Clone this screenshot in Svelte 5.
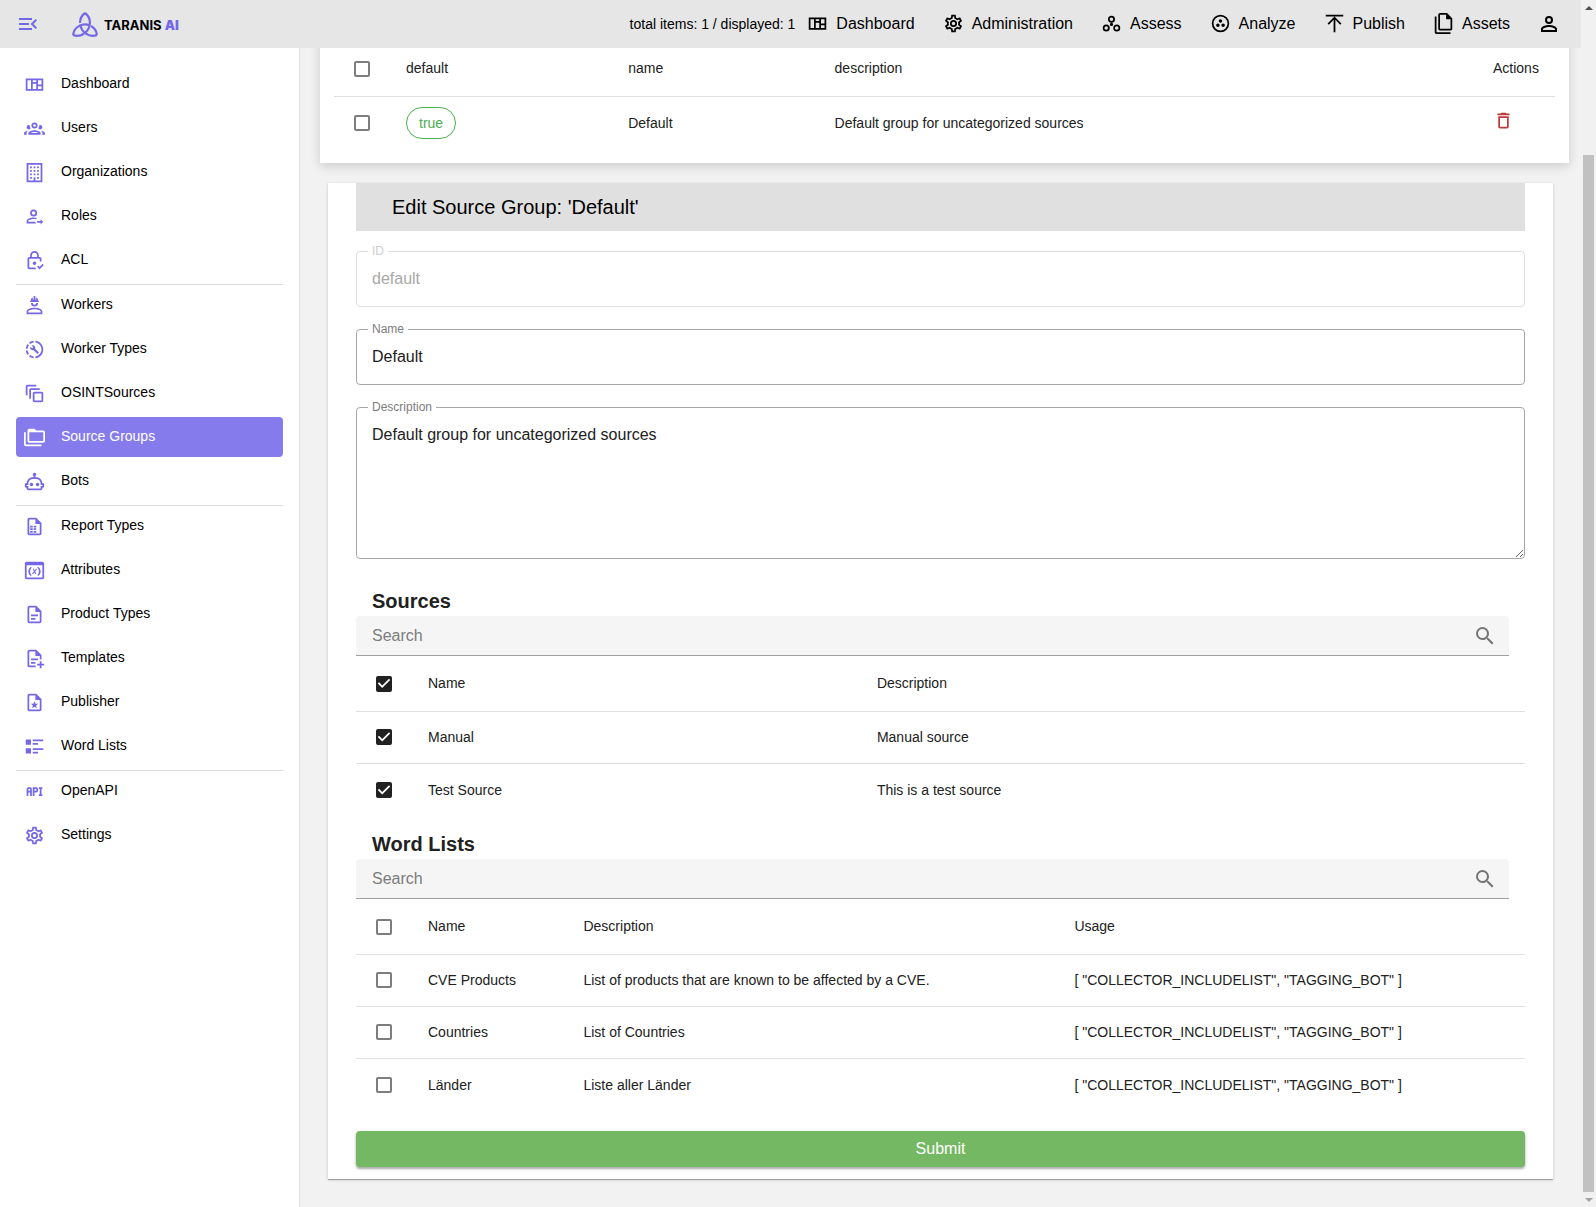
<script>
  const icons = {
    dashboard: 'M2,5V19H22V5H2M4,7H8V17H4V7M10,7H14V9H10V7M10,11H14V17H10V11M16,7H20V12H16V7M16,14H20V17H16V14Z',
    users: 'M12,5A3.5,3.5 0 0,0 8.5,8.5A3.5,3.5 0 0,0 12,12A3.5,3.5 0 0,0 15.5,8.5A3.5,3.5 0 0,0 12,5M12,7A1.5,1.5 0 0,1 13.5,8.5A1.5,1.5 0 0,1 12,10A1.5,1.5 0 0,1 10.5,8.5A1.5,1.5 0 0,1 12,7M5.5,8A2.5,2.5 0 0,0 3,10.5C3,11.44 3.53,12.25 4.29,12.68C4.65,12.88 5.06,13 5.5,13C5.94,13 6.35,12.88 6.71,12.68C7.08,12.47 7.39,12.17 7.62,11.81C6.89,10.86 6.5,9.7 6.5,8.5C6.5,8.41 6.5,8.31 6.5,8.22C6.2,8.08 5.86,8 5.5,8M18.5,8C18.14,8 17.8,8.08 17.5,8.22C17.5,8.31 17.5,8.41 17.5,8.5C17.5,9.7 17.11,10.86 16.38,11.81C16.5,12 16.63,12.15 16.78,12.3C16.94,12.45 17.1,12.58 17.29,12.68C17.65,12.88 18.06,13 18.5,13C18.94,13 19.35,12.88 19.71,12.68C20.47,12.25 21,11.44 21,10.5A2.5,2.5 0 0,0 18.5,8M12,14C9.66,14 5,15.17 5,17.5V19H19V17.5C19,15.17 14.34,14 12,14M4.71,14.55C2.78,14.78 0,15.76 0,17.5V19H3V17.07C3,16.06 3.69,15.22 4.71,14.55M19.29,14.55C20.31,15.22 21,16.06 21,17.07V19H24V17.5C24,15.76 21.22,14.78 19.29,14.55M12,16C13.53,16 15.24,16.5 16.23,17H7.77C8.76,16.5 10.47,16 12,16Z',
    building: 'M19 3V21H13V17.5H11V21H5V3H19M15 7H17V5H15V7M11 7H13V5H11V7M7 7H9V5H7V7M15 11H17V9H15V11M11 11H13V9H11V11M7 11H9V9H7V11M15 15H17V13H15V15M11 15H13V13H11V15M7 15H9V13H7V15M15 19H17V17H15V19M7 19H9V17H7V19M21 1H3V23H21V1Z',
    roles: 'M19,21V19H15V17H19V15L22,18L19,21M11,4A4,4 0 0,1 15,8A4,4 0 0,1 11,12A4,4 0 0,1 7,8A4,4 0 0,1 11,4M11,6A2,2 0 0,0 9,8A2,2 0 0,0 11,10A2,2 0 0,0 13,8A2,2 0 0,0 11,6M11,13C12.1,13 13.66,13.23 15.11,13.69C14.5,14.07 14,14.6 13.61,15.23C12.79,15.03 11.89,14.9 11,14.9C8.03,14.9 4.9,16.36 4.9,17V18.1H13.04C13.13,18.8 13.38,19.44 13.76,20H3V17C3,14.34 8.33,13 11,13Z',
    lock: 'M14 15C14 16.11 13.11 17 12 17C10.89 17 10 16.1 10 15C10 13.89 10.89 13 12 13C13.11 13 14 13.9 14 15M13.09 20C13.21 20.72 13.46 21.39 13.81 22H6C4.89 22 4 21.1 4 20V10C4 8.89 4.89 8 6 8H7V6C7 3.24 9.24 1 12 1S17 3.24 17 6V8H18C19.11 8 20 8.9 20 10V13.09C19.67 13.04 19.34 13 19 13C18.66 13 18.33 13.04 18 13.09V10H6V20H13.09M9 8H15V6C15 4.34 13.66 3 12 3S9 4.34 9 6V8M21.34 15.84L17.75 19.43L16.16 17.84L15 19.25L17.75 22.25L22.5 17.5L21.34 15.84Z',
    worker: 'M12 14.5C7.6 14.5 3 16.2 3 18.8V22H21V18.8C21 16.2 16.4 14.5 12 14.5M12 16.4C15.5 16.4 19.1 17.8 19.1 18.8V20.1H4.9V18.8C4.9 17.8 8.5 16.4 12 16.4M8 9A4 4 0 0 0 12 13A4 4 0 0 0 16 9M10 9H14A2 2 0 0 1 10 9M11.5 1C11.2 1 11 1.2 11 1.5V5H10V2.5C10 2.5 7.75 3.4 7.75 6.2C7.75 6.2 7 6.4 7 8H17C17 6.4 16.25 6.2 16.25 6.2C16.25 3.4 14 2.5 14 2.5V5H13V1.5C13 1.2 12.8 1 12.5 1Z',
    workerType: 'M13 2.03V2.05L13 4.05C17.39 4.59 20.5 8.58 19.96 12.97C19.5 16.61 16.64 19.5 13 19.93V21.93C18.5 21.38 22.5 16.5 21.95 11C21.5 6.25 17.73 2.5 13 2.03M11 2.06C9.05 2.25 7.19 3 5.67 4.26L7.1 5.74C8.22 4.84 9.57 4.26 11 4.06V2.06M4.26 5.67C3 7.19 2.25 9.04 2.05 11H4.05C4.24 9.58 4.8 8.23 5.69 7.1L4.26 5.67M2.06 13C2.26 14.96 3.03 16.81 4.27 18.33L5.69 16.9C4.81 15.77 4.24 14.42 4.06 13H2.06M7.1 18.37L5.67 19.74C7.18 21 9.04 21.79 11 22V20C9.58 19.82 8.23 19.25 7.1 18.37M16.82 15.19L12.71 11.08C13.12 10.04 12.89 8.82 12.03 7.97C11.13 7.06 9.78 6.88 8.69 7.38L10.63 9.32L9.28 10.68L7.29 8.73C6.75 9.82 7 11.17 7.88 12.08C8.74 12.94 9.96 13.16 11 12.76L15.11 16.86C15.29 17.05 15.56 17.05 15.74 16.86L16.78 15.83C17 15.65 17 15.33 16.82 15.19Z',
    layers: 'M4 2C2.89 2 2 2.9 2 4V14H4V4H14V2H4M8 6C6.89 6 6 6.9 6 8V18H8V8H18V6H8M12 10C10.89 10 10 10.9 10 12V20C10 21.11 10.9 22 12 22H20C21.11 22 22 21.11 22 20V12C22 10.9 21.11 10 20 10H12M12 12H20V20H12V12Z',
    folders: 'M22,4A2,2 0 0,1 24,6V16A2,2 0 0,1 22,18H6A2,2 0 0,1 4,16V4A2,2 0 0,1 6,2H12L14,4H22M2,6V20H20V22H2A2,2 0 0,1 0,20V6H2M6,6V16H22V6H6Z',
    robot: 'M17.5 15.5C17.5 16.61 16.61 17.5 15.5 17.5S13.5 16.61 13.5 15.5 14.4 13.5 15.5 13.5 17.5 14.4 17.5 15.5M8.5 13.5C7.4 13.5 6.5 14.4 6.5 15.5S7.4 17.5 8.5 17.5 10.5 16.61 10.5 15.5 9.61 13.5 8.5 13.5M23 15V18C23 18.55 22.55 19 22 19H21V20C21 21.11 20.11 22 19 22H5C3.9 22 3 21.11 3 20V19H2C1.45 19 1 18.55 1 18V15C1 14.45 1.45 14 2 14H3C3 10.13 6.13 7 10 7H11V5.73C10.4 5.39 10 4.74 10 4C10 2.9 10.9 2 12 2S14 2.9 14 4C14 4.74 13.6 5.39 13 5.73V7H14C17.87 7 21 10.13 21 14H22C22.55 14 23 14.45 23 15M21 16H19V14C19 11.24 16.76 9 14 9H10C7.24 9 5 11.24 5 14V16H3V17H5V20H19V17H21V16Z',
    report: 'M14 2H6C4.89 2 4 2.9 4 4V20C4 21.11 4.89 22 6 22H18C19.11 22 20 21.11 20 20V8L14 2M18 20H6V4H13V9H18V20M7 11H10V13H7V11M11 11H14V13H11V11M7 14H10V16H7V14M11 14H14V16H11V14M7 17H10V19H7V17M11 17H14V19H11V17Z',
    variable: 'M21 2H3C1.9 2 1 2.9 1 4V20C1 21.1 1.9 22 3 22H21C22.1 22 23 21.1 23 20V4C23 2.9 22.1 2 21 2M21 20H3V6H21V20M16.6 8C18.1 9.3 19 11.1 19 13C19 14.9 18.1 16.7 16.6 18L15 17.4C16.3 16.4 17 14.7 17 13S16.3 9.6 15 8.6L16.6 8M7.4 8L9 8.6C7.7 9.6 7 11.3 7 13S7.7 16.4 9 17.4L7.4 18C5.9 16.7 5 14.9 5 13S5.9 9.3 7.4 8M12.1 12L13.5 10H15L12.8 13L14.1 16H12.8L12 14L10.6 16H9L11.3 12.9L10 10H11.3L12.1 12Z',
    document: 'M6,2A2,2 0 0,0 4,4V20A2,2 0 0,0 6,22H18A2,2 0 0,0 20,20V8L14,2H6M6,4H13V9H18V20H6V4M8,12V14H16V12H8M8,16V18H13V16H8Z',
    documentPlus: 'M23 18H20V15H18V18H15V20H18V23H20V20H23M6 2C4.89 2 4 2.9 4 4V20C4 21.11 4.89 22 6 22H13.81C13.45 21.38 13.2 20.7 13.08 20H6V4H13V9H18V13.08C18.33 13.03 18.67 13 19 13S19.67 13.03 20 13.08V8L14 2M8 12V14H16V12M8 16V18H13V16Z',
    star: 'M14 2H6C4.89 2 4 2.9 4 4V20C4 21.11 4.89 22 6 22H18C19.11 22 20 21.11 20 20V8L14 2M18 20H6V4H13V9H18V20M12 10.5L13.2 13.3L16.2 13.5L13.9 15.5L14.6 18.5L12 16.9L9.4 18.5L10.1 15.5L7.8 13.5L10.8 13.3Z',
    list: 'M2 14H8V20H2M16 8H10V10H16M2 10H8V4H2M10 4V6H22V4M10 20H16V18H10M10 16H22V14H10',
    api: 'M7 7H5A2 2 0 0 0 3 9V17H5V13H7V17H9V9A2 2 0 0 0 7 7M7 11H5V9H7M14 7H10V17H12V13H14A2 2 0 0 0 16 11V9A2 2 0 0 0 14 7M14 11H12V9H14M20 9V15H21V17H17V15H18V9H17V7H21V9Z',
    cog: 'M12,8A4,4 0 0,1 16,12A4,4 0 0,1 12,16A4,4 0 0,1 8,12A4,4 0 0,1 12,8M12,10A2,2 0 0,0 10,12A2,2 0 0,0 12,14A2,2 0 0,0 14,12A2,2 0 0,0 12,10M10,22C9.75,22 9.54,21.82 9.5,21.58L9.13,18.93C8.5,18.68 7.96,18.34 7.44,17.94L4.95,18.95C4.73,19.03 4.46,18.95 4.34,18.73L2.34,15.27C2.21,15.05 2.27,14.78 2.46,14.63L4.57,12.97L4.5,12L4.57,11L2.46,9.37C2.27,9.22 2.21,8.95 2.34,8.73L4.34,5.27C4.46,5.05 4.73,4.96 4.95,5.05L7.44,6.05C7.96,5.66 8.5,5.32 9.13,5.07L9.5,2.42C9.54,2.18 9.75,2 10,2H14C14.25,2 14.46,2.18 14.5,2.42L14.87,5.07C15.5,5.32 16.04,5.66 16.56,6.05L19.05,5.05C19.27,4.96 19.54,5.05 19.66,5.27L21.66,8.73C21.79,8.95 21.73,9.22 21.54,9.37L19.43,11L19.5,12L19.43,13L21.54,14.63C21.73,14.78 21.79,15.05 21.66,15.27L19.66,18.73C19.54,18.95 19.27,19.04 19.05,18.95L16.56,17.95C16.04,18.34 15.5,18.68 14.87,18.93L14.5,21.58C14.46,21.82 14.25,22 14,22H10M11.25,4L10.88,6.61C9.68,6.86 8.62,7.5 7.85,8.39L5.44,7.35L4.69,8.65L6.8,10.2C6.4,11.37 6.4,12.64 6.8,13.8L4.68,15.36L5.43,16.66L7.86,15.62C8.63,16.5 9.68,17.14 10.87,17.38L11.24,20H12.76L13.13,17.39C14.32,17.14 15.37,16.5 16.14,15.62L18.57,16.66L19.32,15.36L17.2,13.81C17.6,12.64 17.6,11.37 17.2,10.2L19.31,8.65L18.56,7.35L16.15,8.39C15.38,7.5 14.32,6.86 13.12,6.62L12.75,4H11.25Z',
    assess: 'M18,19C16.89,19 16,18.1 16,17C16,15.89 16.89,15 18,15A2,2 0 0,1 20,17A2,2 0 0,1 18,19M18,13A4,4 0 0,0 14,17A4,4 0 0,0 18,21A4,4 0 0,0 22,17A4,4 0 0,0 18,13M12,11.1A1.9,1.9 0 0,0 10.1,13A1.9,1.9 0 0,0 12,14.9A1.9,1.9 0 0,0 13.9,13A1.9,1.9 0 0,0 12,11.1M6,19C4.89,19 4,18.1 4,17C4,15.89 4.89,15 6,15A2,2 0 0,1 8,17A2,2 0 0,1 6,19M6,13A4,4 0 0,0 2,17A4,4 0 0,0 6,21A4,4 0 0,0 10,17A4,4 0 0,0 6,13M12,9C10.89,9 10,8.1 10,7C10,5.89 10.89,5 12,5A2,2 0 0,1 14,7A2,2 0 0,1 12,9M12,11A4,4 0 0,0 16,7A4,4 0 0,0 12,3A4,4 0 0,0 8,7A4,4 0 0,0 12,11Z',
    analyze: 'M15,12C13.89,12 13,12.89 13,14A2,2 0 0,0 15,16A2,2 0 0,0 17,14C17,12.89 16.1,12 15,12M12,20A8,8 0 0,1 4,12A8,8 0 0,1 12,4A8,8 0 0,1 20,12A8,8 0 0,1 12,20M12,2A10,10 0 0,0 2,12A10,10 0 0,0 12,22A10,10 0 0,0 22,12A10,10 0 0,0 12,2M14,9C14,7.89 13.1,7 12,7C10.89,7 10,7.89 10,9A2,2 0 0,0 12,11A2,2 0 0,0 14,9M9,12A2,2 0 0,0 7,14A2,2 0 0,0 9,16C10.11,16 11,15.1 11,14C11,12.89 10.11,12 9,12Z',
    publish: 'M4.08,11.92L12,4L19.92,11.92L18.5,13.33L13,7.83V22H11V7.83L5.5,13.33L4.08,11.92M12,4H22V2H2V4H12Z',
    files: 'M16 0H8C6.9 0 6 .9 6 2V18C6 19.1 6.9 20 8 20H20C21.1 20 22 19.1 22 18V6L16 0M20 18H8V2H15V7H20V18M4 4V22H20V24H4C2.9 24 2 23.1 2 22V4H4Z',
    account: 'M12,4A4,4 0 0,1 16,8A4,4 0 0,1 12,12A4,4 0 0,1 8,8A4,4 0 0,1 12,4M12,6A2,2 0 0,0 10,8A2,2 0 0,0 12,10A2,2 0 0,0 14,8A2,2 0 0,0 12,6M12,13C14.67,13 20,14.33 20,17V20H4V17C4,14.33 9.33,13 12,13M12,14.9C9.03,14.9 5.9,16.36 5.9,17V18.1H18.1V17C18.1,16.36 14.97,14.9 12,14.9Z',
    menu: 'M21,15.61L19.59,17L14.58,12L19.59,7L21,8.39L17.44,12L21,15.61M3,6H16V8H3V6M3,13V11H13V13H3M3,18V16H16V18H3Z',
    trash: 'M6,19A2,2 0 0,0 8,21H16A2,2 0 0,0 18,19V7H6V19M8,9H16V19H8V9M15.5,4L14.5,3H9.5L8.5,4H5V6H19V4H15.5Z',
    magnify: 'M9.5,3A6.5,6.5 0 0,1 16,9.5C16,11.11 15.41,12.59 14.44,13.73L14.71,14H15.5L20.5,19L19,20.5L14,15.5V14.71L13.73,14.44C12.59,15.41 11.11,16 9.5,16A6.5,6.5 0 0,1 3,9.5A6.5,6.5 0 0,1 9.5,3M9.5,5C7,5 5,7 5,9.5C5,12 7,14 9.5,14C12,14 14,12 14,9.5C14,7 12,5 9.5,5Z',
  };

  const topLinks = [
    ['dashboard', 'Dashboard'],
    ['cog', 'Administration'],
    ['assess', 'Assess'],
    ['analyze', 'Analyze'],
    ['publish', 'Publish'],
    ['files', 'Assets'],
  ];

  const sideGroups = [
    [
      ['dashboard', 'Dashboard'],
      ['users', 'Users'],
      ['building', 'Organizations'],
      ['roles', 'Roles'],
      ['lock', 'ACL'],
    ],
    [
      ['worker', 'Workers'],
      ['workerType', 'Worker Types'],
      ['layers', 'OSINTSources'],
      ['folders', 'Source Groups'],
      ['robot', 'Bots'],
    ],
    [
      ['report', 'Report Types'],
      ['variable', 'Attributes'],
      ['document', 'Product Types'],
      ['documentPlus', 'Templates'],
      ['star', 'Publisher'],
      ['list', 'Word Lists'],
    ],
    [
      ['api', 'OpenAPI'],
      ['cog', 'Settings'],
    ],
  ];

  const usage = '[ "COLLECTOR_INCLUDELIST", "TAGGING_BOT" ]';

  const pickers = [
    {
      id: 'sources',
      title: 'Sources',
      columns: ['Name', 'Description'],
      checked: true,
      rows: [
        ['Manual', 'Manual source'],
        ['Test Source', 'This is a test source'],
      ],
    },
    {
      id: 'words',
      title: 'Word Lists',
      columns: ['Name', 'Description', 'Usage'],
      checked: false,
      rows: [
        ['CVE Products', 'List of products that are known to be affected by a CVE.', usage],
        ['Countries', 'List of Countries', usage],
        ['Länder', 'Liste aller Länder', usage],
      ],
    },
  ];

  let name = $state('Default');
  let description = $state('Default group for uncategorized sources');
</script>

{#snippet icon(key)}
  <svg class="icon" viewBox="0 0 24 24" aria-hidden="true"><path fill-rule="evenodd" d={icons[key]} /></svg>
{/snippet}

<div class="window">
  <div class="app">
    <header>
      <button class="menu" aria-label="Toggle menu">{@render icon('menu')}</button>
      <a class="brand" href="#home">
        <svg class="knot" viewBox="0 0 26 25" aria-hidden="true">
          <path pathLength="100" d="M13 1C1.7 9.5 11.7 27.9 25 23" />
          <path pathLength="100" d="M25 23C23 9 3 9 1 23" />
          <path pathLength="100" d="M1 23C14.3 27.9 24.3 9.5 13 1" />
        </svg>
        <span>TARANIS <b>AI</b></span>
      </a>
      <span class="count">total items: 1 / displayed: 1</span>
      <nav class="top" aria-label="Main">
        {#each topLinks as [key, label]}
          <a href="#{key}">{@render icon(key)}{label}</a>
        {/each}
      </nav>
      <button class="user" aria-label="Account">{@render icon('account')}</button>
    </header>

    <div class="body">
      <nav class="side" aria-label="Administration">
        {#each sideGroups as group}
          <div class="group">
            {#each group as [key, label]}
              <a href="#{key}" class:active={key === 'folders'}>{@render icon(key)}<span>{label}</span></a>
            {/each}
          </div>
        {/each}
      </nav>

      <main>
        <section class="overview">
          <table>
            <colgroup><col class="tick" /><col class="flag" /><col class="label" /><col /><col class="actions" /></colgroup>
            <thead>
              <tr>
                <th><input type="checkbox" aria-label="Select all groups" /></th>
                <th>default</th>
                <th>name</th>
                <th>description</th>
                <th>Actions</th>
              </tr>
            </thead>
            <tbody>
              <tr>
                <td><input type="checkbox" aria-label="Select Default" /></td>
                <td><span class="chip">true</span></td>
                <td>Default</td>
                <td>Default group for uncategorized sources</td>
                <td><button class="delete" aria-label="Delete Default">{@render icon('trash')}</button></td>
              </tr>
            </tbody>
          </table>
        </section>

        <form class="edit" onsubmit={(e) => e.preventDefault()}>
          <h1>Edit Source Group: 'Default'</h1>

          <div class="field disabled">
            <label for="group-id">ID</label>
            <input id="group-id" value="default" disabled />
          </div>
          <div class="field">
            <label for="group-name">Name</label>
            <input id="group-name" bind:value={name} />
          </div>
          <div class="field">
            <label for="group-description">Description</label>
            <textarea id="group-description" rows="5" bind:value={description}></textarea>
          </div>

          {#each pickers as picker}
            <section class="picker {picker.id}">
              <h2>{picker.title}</h2>
              <div class="search">
                <input type="text" placeholder="Search" aria-label="Search {picker.title}" />
                {@render icon('magnify')}
              </div>
              <table>
                <colgroup>
                  <col class="tick" /><col class="name" /><col class="about" />
                  {#if picker.columns.length > 2}<col />{/if}
                </colgroup>
                <thead>
                  <tr>
                    <th><input type="checkbox" checked={picker.checked} aria-label="Select all {picker.title}" /></th>
                    {#each picker.columns as column}<th>{column}</th>{/each}
                  </tr>
                </thead>
                <tbody>
                  {#each picker.rows as row}
                    <tr>
                      <td><input type="checkbox" checked={picker.checked} aria-label="Select {row[0]}" /></td>
                      {#each row as cell}<td>{cell}</td>{/each}
                    </tr>
                  {/each}
                </tbody>
              </table>
            </section>
          {/each}

          <button class="submit" type="submit">Submit</button>
        </form>
      </main>
    </div>
  </div>

  <div class="scrollbar" aria-hidden="true">
    <span class="arrow up"></span>
    <span></span>
    <span class="thumb"></span>
    <span class="arrow down"></span>
  </div>
</div>

<style>
  :global(body) {
    margin: 0;
    font-family: 'Liberation Sans', Arial, sans-serif;
    font-size: 14px;
    line-height: 20px;
    color: #212121;
  }

  .window,
  .window * {
    box-sizing: border-box;
  }

  .window {
    display: flex;
    min-height: 100vh;
    background: #f2f2f2;
  }

  .app {
    flex: 1;
    min-width: 0;
    display: flex;
    flex-direction: column;
  }

  button,
  input,
  textarea {
    font: inherit;
    color: inherit;
  }

  button {
    border: 0;
    padding: 0;
    background: none;
    display: flex;
  }

  a {
    color: #000;
    text-decoration: none;
  }

  .icon {
    width: 21px;
    height: 21px;
    flex: none;
    fill: currentColor;
  }

  header {
    position: relative;
    z-index: 1;
    display: flex;
    align-items: center;
    height: 48px;
    padding: 0 20px 0 16px;
    background: #e6e6e6;
    color: #000;
  }

  .menu {
    color: #7468e8;
  }

  .menu .icon,
  .user .icon,
  .search .icon {
    width: 24px;
    height: 24px;
  }

  .brand {
    display: flex;
    align-items: center;
    gap: 6px;
    margin-left: 32px;
    font: 700 13px/20px Inter, sans-serif;
  }

  .brand span {
    padding-top: 2px;
  }

  .brand b {
    color: #7468e8;
  }

  .knot {
    width: 26px;
    height: 25px;
    fill: none;
    stroke: #7468e8;
    stroke-width: 2.2;
    stroke-dasharray: 32 5 63;
  }

  .count {
    margin-left: auto;
  }

  .top {
    display: flex;
    gap: 28px;
    margin: 0 27px 0 12px;
    padding-bottom: 1px;
    font-size: 16px;
  }

  .top a {
    display: flex;
    align-items: center;
    gap: 8px;
  }

  .body {
    flex: 1;
    display: flex;
  }

  .side {
    width: 300px;
    flex: none;
    padding: 16px 16px 0;
    background: #fff;
    border-right: 1px solid #e0e0e0;
  }

  .group + .group {
    border-top: 1px solid #dcdcdc;
  }

  .side a {
    display: flex;
    align-items: center;
    gap: 16px;
    height: 40px;
    margin-bottom: 4px;
    padding: 0 8px;
    border-radius: 4px;
  }

  .side span {
    padding-bottom: 2px;
  }

  .side .icon {
    color: #7468e8;
  }

  .side .active,
  .side .active .icon {
    color: #fff;
  }

  .side .active {
    background: #867bec;
  }

  main {
    flex: 1;
    min-width: 0;
    padding: 0 12px 28px 20px;
  }

  .overview {
    margin-top: -21px;
    padding: 14px;
    background: #fff;
    box-shadow: 0 3px 10px rgba(0, 0, 0, 0.16);
  }

  table {
    width: 100%;
    table-layout: fixed;
    border-collapse: separate;
    border-spacing: 0;
  }

  th,
  td {
    height: 52px;
    padding: 0 16px;
    text-align: left;
    font-weight: 400;
  }

  th {
    height: 56px;
  }

  th:first-child,
  td:first-child {
    padding: 0 20px;
  }

  th,
  tr:not(:last-child) td {
    padding-bottom: 1px;
    border-bottom: 1px solid #e0e0e0;
  }

  .tick {
    width: 56px;
  }

  .flag {
    width: 18.2%;
  }

  .label {
    width: 16.9%;
  }

  .actions {
    width: 78px;
  }

  input[type='checkbox'] {
    appearance: none;
    display: block;
    width: 16px;
    height: 16px;
    margin: 0;
    border: 2px solid #7d7d7d;
    border-radius: 2px;
  }

  input[type='checkbox']:checked {
    border: 0;
    background: #212121;
  }

  input[type='checkbox']:checked::before {
    content: '';
    display: block;
    width: 16px;
    height: 16px;
    background: #fff;
    clip-path: polygon(39% 78%, 11% 50%, 19% 42%, 39% 62%, 81% 20%, 89% 28%);
  }

  .chip {
    display: inline-block;
    padding: 5px 12px;
    border: 1px solid #4caf50;
    border-radius: 16px;
    color: #4caf50;
  }

  .delete {
    padding-bottom: 5px;
    color: #ba3b3b;
  }

  .edit {
    margin: 20px 16px 0 8px;
    padding: 0 28px 12px;
    background: #fff;
    box-shadow: 0 1px 3px rgba(0, 0, 0, 0.2), 0 1px 0 rgba(0, 0, 0, 0.25);
  }

  h1 {
    margin: 0 0 20px;
    padding: 0 36px;
    background: #e0e0e0;
    color: #000;
    font-size: 20px;
    font-weight: 400;
    line-height: 48px;
  }

  .field {
    position: relative;
    margin-bottom: 22px;
  }

  .field label {
    position: absolute;
    top: -8px;
    left: 12px;
    padding: 0 4px;
    background: #fff;
    color: #7d7d7d;
    font-size: 12px;
    line-height: 16px;
  }

  .field input,
  .field textarea {
    display: block;
    width: 100%;
    height: 56px;
    margin: 0;
    padding: 15px;
    border: 1px solid #a6a6a6;
    border-radius: 4px;
    background: transparent;
    font-size: 16px;
    line-height: 24px;
  }

  .field textarea {
    height: 152px;
  }

  .disabled label {
    color: #cfcfcf;
  }

  .disabled input {
    border-color: #dedede;
    color: #a8a8a8;
  }

  .sources {
    margin-top: 26px;
  }

  .words {
    margin-top: 12px;
  }

  h2 {
    margin: 0;
    padding: 2px 16px 0;
    font-size: 20px;
    line-height: 29px;
  }

  .search {
    display: flex;
    align-items: center;
    height: 40px;
    margin-right: 16px;
    padding: 0 12px 0 16px;
    border-bottom: 1px solid #a0a0a0;
    border-radius: 4px 4px 0 0;
    background: #f5f5f5;
    color: #757575;
  }

  .search input {
    flex: 1;
    min-width: 0;
    border: 0;
    padding: 0;
    background: none;
    font-size: 16px;
  }

  .search input::placeholder {
    color: #7c7c7c;
    opacity: 1;
  }

  .sources .name {
    width: 38.4%;
  }

  .words .name {
    width: 13.3%;
  }

  .words .about {
    width: 42%;
  }

  .submit {
    justify-content: center;
    width: 100%;
    margin-top: 20px;
    border-radius: 4px;
    background: #74b863;
    color: #fff;
    font-size: 16px;
    line-height: 36px;
    box-shadow: 0 2px 2px rgba(0, 0, 0, 0.25), 0 1px 4px rgba(0, 0, 0, 0.15);
  }

  .scrollbar {
    display: grid;
    grid-template-rows: 15px 140fr 1037fr 15px;
    width: 15px;
    flex: none;
    background: #f1f1f1;
  }

  .thumb {
    margin: 0 2px;
    background: #c1c1c1;
  }

  .arrow {
    place-self: center;
    border: 4px solid transparent;
  }

  .up {
    border-top: 0;
    border-bottom-color: #505050;
  }

  .down {
    border-bottom: 0;
    border-top-color: #a3a3a3;
  }
</style>
